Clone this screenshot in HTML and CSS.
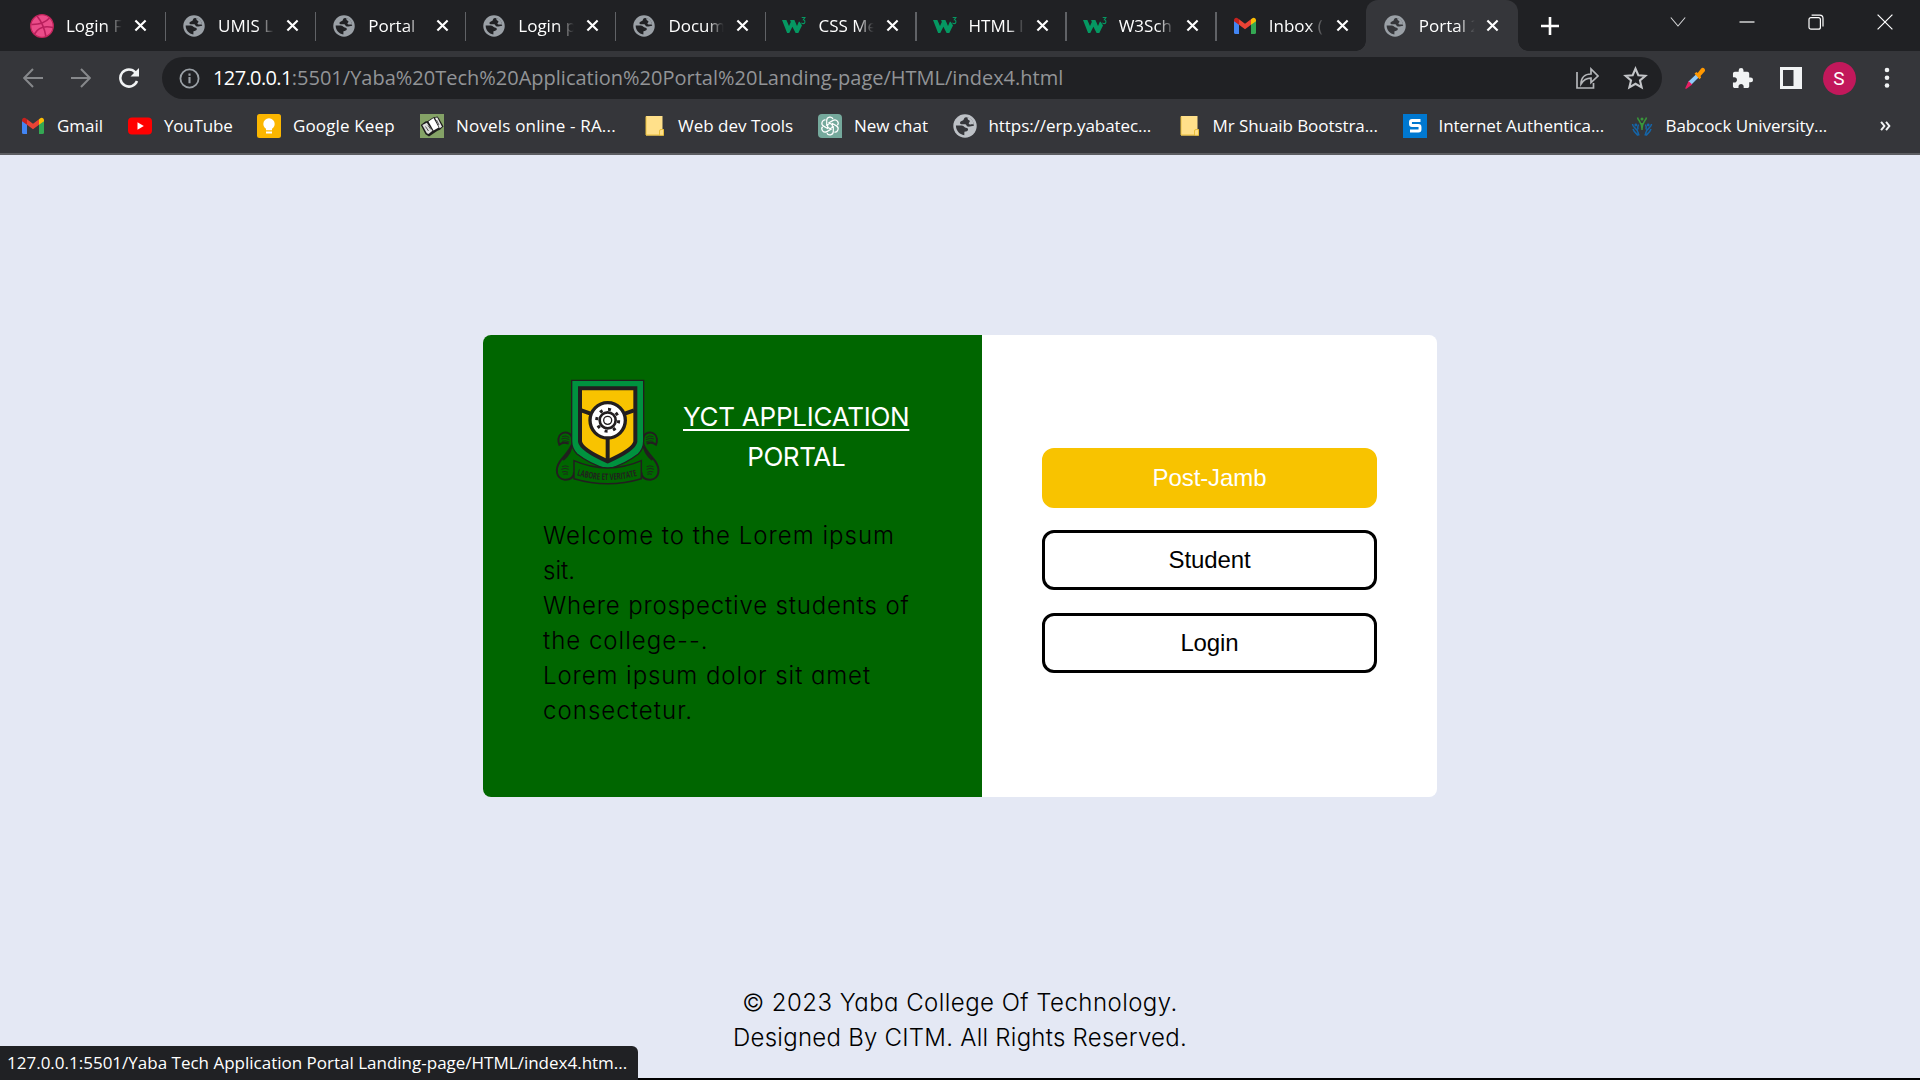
FILE: index.html
```html
<!DOCTYPE html>
<html lang="en">
<head>
<meta charset="utf-8">
<title>Portal 2</title>
<link rel="stylesheet" href="styles.css">
</head>
<body>
<svg class="defs" aria-hidden="true">
  <symbol id="globe" viewBox="0 0 24 24">
    <circle cx="12" cy="12" r="11.700" fill="currentColor"/>
    <path class="cut" d="M13 3.200c-2.500.6-1.600 2-2.800 3-1.400 1-3 .9-3.200 2.500-.1 1 1 1.500 2.300 1.500h2.800c1.300 0 1.300 2.100 2.800 2.400 2 .4 3.500-.9 6-.9C20.900 7 17.500 3.400 13 3.200zM2.900 11.500c0 5 3.600 9 8.400 9.700l.1-3.400c1.900-.3 3.600-.9 3.700-2.400.1-1.600-2.200-1.400-3.400-2.200-1.300-.8-1.200-1.700-3.200-1.700z"/>
    <path d="M14.500 3.300c0 1.500.3 2.600 1.500 3 1 .3 1.100 1.500.2 2.200-.9.800-.4 1.700.9 1.900 1.200.2 2-.4 3.800.2C20.500 7 18.500 4.300 14.500 3.300z" fill="currentColor"/>
  </symbol>
  <symbol id="gmail" viewBox="0 0 22 18">
    <path d="M0 3v12.500Q0 17 1.500 17H5V7z" fill="#4285f4"/>
    <path d="M22 3v12.500q0 1.500-1.500 1.500H17V7z" fill="#34a853"/>
    <path d="M5 2.200l6 4.600 6-4.600v5.600l-6 4.500-6-4.500z" fill="#ea4335"/>
    <path d="M0 3.200C0 .8 2.400 0 4 1.400l1 .8v5.600L0 4.200z" fill="#c5221f"/>
    <path d="M22 3.200C22 .8 19.600 0 18 1.400l-1 .8v5.600l5-3.600z" fill="#fbbc04"/>
  </symbol>
  <symbol id="w3" viewBox="0 0 24 20">
    <path d="M0 4h4.400l2.600 6 1.800-4-.7-2h4.300l2.600 6 1.800-4.200h.9l2.300 3.700L16.300 17h-2.700L10.400 10.800 7.300 17H5.100z" fill="#059862"/>
    <path d="M19.700 1.500h3.200l-1.600 2.300c2.500.4 2 3.900-.2 3.800-.8 0-1.300-.3-1.700-.9" fill="none" stroke="#059862" stroke-width="1.100"/>
  </symbol>
  <symbol id="x" viewBox="0 0 14 14"><path d="M1.500 1.500l11 11M12.500 1.500l-11 11" stroke="#fff" stroke-width="2.300" fill="none"/></symbol>
  <symbol id="folder" viewBox="0 0 24 24">
    <path d="M4 2h16.500v13.500h1.300v6H4z" fill="#ffe08a"/><path d="M4 2.500v18.500h13.500V17q0-1.500 1.500-1.500h2.500v5.800h-4" fill="none" stroke="#e9bf3c"/>
  </symbol>
</svg>

<div class="browser">
  <div class="tabstrip">
    <div class="tab first"><svg class="fav" viewBox="0 0 24 24"><circle cx="12" cy="12" r="11.300" fill="#ea4c89" stroke="#c2255c" stroke-width="1.300"/><path d="M7 2c5 6 7.500 12.500 8.800 20M1.500 10.500C9 10.700 15 9 19.500 4M4.500 20c3.500-6.500 10-8.500 18.500-6.500" fill="none" stroke="#b81f5c" stroke-width="1.600"/></svg><span class="title">Login F</span><svg class="close"><use href="#x"/></svg></div>
    <div class="tab"><svg class="fav globe"><use href="#globe"/></svg><span class="title">UMIS L</span><svg class="close"><use href="#x"/></svg></div>
    <div class="tab"><svg class="fav globe"><use href="#globe"/></svg><span class="title">Portal</span><svg class="close"><use href="#x"/></svg></div>
    <div class="tab"><svg class="fav globe"><use href="#globe"/></svg><span class="title">Login p</span><svg class="close"><use href="#x"/></svg></div>
    <div class="tab"><svg class="fav globe"><use href="#globe"/></svg><span class="title">Docum</span><svg class="close"><use href="#x"/></svg></div>
    <div class="tab"><svg class="fav"><use href="#w3"/></svg><span class="title">CSS Me</span><svg class="close"><use href="#x"/></svg></div>
    <div class="tab"><svg class="fav"><use href="#w3"/></svg><span class="title">HTML I</span><svg class="close"><use href="#x"/></svg></div>
    <div class="tab"><svg class="fav"><use href="#w3"/></svg><span class="title">W3Sch</span><svg class="close"><use href="#x"/></svg></div>
    <div class="tab last"><svg class="fav mail"><use href="#gmail"/></svg><span class="title">Inbox (</span><svg class="close"><use href="#x"/></svg></div>
    <div class="tab active"><svg class="fav globe"><use href="#globe"/></svg><span class="title">Portal 2</span><svg class="close"><use href="#x"/></svg></div>
    <svg class="newtab" viewBox="0 0 18 18"><path d="M9 0v18M0 9h18" stroke="#fff" stroke-width="2.600"/></svg>
    <div class="controls">
      <svg viewBox="0 0 16 16"><path d="M.8 3.500L8 12l7.200-8.500" fill="none" stroke="#d5d6d8" stroke-width="1.100"/></svg>
      <svg viewBox="0 0 16 16"><path d="M.5 8h15" stroke="#fff" stroke-width="1.200"/></svg>
      <svg viewBox="0 0 16 16"><rect x="1" y="3.600" width="11.400" height="11.600" rx="2" fill="none" stroke="#fff" stroke-width="1.200"/><path d="M3.600 1.200h8.200q3.200 0 3.200 3.200v8" fill="none" stroke="#fff" stroke-width="1.200"/></svg>
      <svg viewBox="0 0 16 16"><path d="M.6.6l14.800 14.800M15.400.6L.6 15.400" stroke="#fff" stroke-width="1.200"/></svg>
    </div>
  </div>

  <div class="toolbar">
    <div class="nav">
      <svg viewBox="0 0 20 20"><path d="M20 10H1.500M10 1L1.200 10l8.800 9" fill="none" stroke="#86888b" stroke-width="2"/></svg>
      <svg viewBox="0 0 20 20"><path d="M0 10h18.500M10 1l8.800 9-8.800 9" fill="none" stroke="#86888b" stroke-width="2"/></svg>
      <svg viewBox="0 0 20 20"><path d="M18 13a8.600 8.600 0 1 1-1.600-8.700" fill="none" stroke="#f1f3f4" stroke-width="2.500"/><path d="M20 0v8.500h-8.500z" fill="#f1f3f4"/></svg>
    </div>
    <div class="omnibox">
      <svg class="info" viewBox="0 0 22 22"><circle cx="11" cy="11" r="9.500" fill="none" stroke="#9aa0a6" stroke-width="1.900"/><path d="M11 9.500V16M11 5.800v2.200" stroke="#9aa0a6" stroke-width="2.200"/></svg>
      <span class="url"><span class="host">127.0.0.1</span>:5501/Yaba%20Tech%20Application%20Portal%20Landing-page/HTML/index4.html</span>
      <svg class="share" viewBox="0 0 23 22"><path d="M1 5v16h16.500v-5" fill="none" stroke="#b4b6b9" stroke-width="1.700"/><path d="M5 17c0-6.500 4-10 10-10V2l7 7-7 6.500v-4.300c-4.500 0-7.500 1.800-10 5.800z" fill="none" stroke="#b4b6b9" stroke-width="1.700"/></svg>
      <svg class="star" viewBox="0 0 24 24"><path d="M12 2.500l2.700 6.300 6.800.6-5.200 4.500 1.600 6.700-5.900-3.500-5.900 3.500 1.600-6.700-5.200-4.500 6.800-.6z" fill="none" stroke="#c4c6c9" stroke-width="2"/></svg>
    </div>
    <div class="actions">
      <svg viewBox="0 0 22 22"><path d="M4 15L13 6.500l2.800 2.800L7 18z" fill="#90caf9"/><path d="M1.200 21.200L4.600 14l3.600 3.400-5.400 4.200q-1.200.6-1.600-.4z" fill="#e91e63"/><path d="M10.500 6.500l2-1.500 1.200 1 3.300-4.300c2-2.300 5.200.5 3.600 2.900L16.500 9l.6 1.500-1.600 1.800z" fill="#ff9800"/></svg>
      <svg viewBox="1 0 23 23"><path d="M20.500 11H19V7c0-1.100-.9-2-2-2h-4V3.500a2.500 2.500 0 0 0-5 0V5H4c-1.100 0-1.990.9-1.990 2v3.800H3.500c1.490 0 2.700 1.210 2.700 2.700s-1.210 2.700-2.700 2.700H2V20c0 1.100.9 2 2 2h3.800v-1.500c0-1.490 1.210-2.700 2.700-2.700s2.700 1.210 2.700 2.700V22H17c1.100 0 2-.9 2-2v-4h1.500a2.500 2.500 0 0 0 0-5z" fill="#f1f3f4"/></svg>
      <svg viewBox="0 0 22 22"><path fill-rule="evenodd" d="M0 0h22v22H0zM3 3v16h10.500V3z" fill="#f1f3f4"/></svg>
      <span class="avatar">S</span>
      <svg viewBox="0 0 22 22"><g fill="#f1f3f4"><circle cx="11" cy="3" r="2.300"/><circle cx="11" cy="10.700" r="2.300"/><circle cx="11" cy="18.500" r="2.300"/></g></svg>
    </div>
  </div>

  <div class="bookmarks">
    <div class="bm"><svg class="mail"><use href="#gmail"/></svg><span>Gmail</span></div>
    <div class="bm yt"><svg viewBox="0 0 24 24"><rect y="3.500" width="24" height="17" rx="4" fill="#f00"/><path d="M9.500 8.300v7.400l6.300-3.700z" fill="#fff"/></svg><span>YouTube</span></div>
    <div class="bm keep"><svg viewBox="0 0 24 24"><rect width="24" height="24" rx="2.500" fill="#fbb600"/><circle cx="12" cy="10" r="5.700" fill="#fff"/><path d="M9 13h6v3.300H9zM9 17.600h6v2H9z" fill="#fff"/></svg><span>Google Keep</span></div>
    <div class="bm novels"><svg viewBox="0 0 24 24"><rect width="24" height="24" fill="#84a266"/><path d="M.8 11l4.500-3.500 2.500-.5L13 3.500l4.500-1L19 4.500l4.500 8-3.500 3.300-2.500 1L9 22.500l-3.500-2.300z" fill="#1d1d1d"/><path d="M2.300 11l4.500-2.300 5.700 8-4 3.300-1.700-.8z" fill="#ddd"/><path d="M8.500 7.500L13.500 4l5.200 9.500-5.200 3z" fill="#fff"/><path d="M15 3.800l2.300-.3 4.700 9.200-2.300 1.500z" fill="#eee"/><path d="M5.500 12.500l3 4.500M8 11.500l3 4M16.500 6l2.500 5" stroke="#555"/></svg><span>Novels online - RA...</span></div>
    <div class="bm"><svg><use href="#folder"/></svg><span>Web dev Tools</span></div>
    <div class="bm"><svg viewBox="0 0 24 24"><path d="M4 0h16q4 0 4 4v20H4q-4 0-4-4V4q0-4 4-4z" fill="#75a99c"/><g fill="none" stroke="#fff" stroke-width="1.200"><path id="petal" d="M12 9.300l-3.300 1.900V6.500c0-4 5.500-4.400 6.300-1.300"/><use href="#petal" transform="rotate(60 12 12)"/><use href="#petal" transform="rotate(120 12 12)"/><use href="#petal" transform="rotate(180 12 12)"/><use href="#petal" transform="rotate(240 12 12)"/><use href="#petal" transform="rotate(300 12 12)"/></g></svg><span>New chat</span></div>
    <div class="bm tight"><svg class="globe light"><use href="#globe"/></svg><span>https://erp.yabatec...</span></div>
    <div class="bm tight"><svg><use href="#folder"/></svg><span>Mr Shuaib Bootstra...</span></div>
    <div class="bm tight"><svg viewBox="0 0 24 24"><rect width="24" height="24" fill="#0078d0"/><path d="M17.500 6.500H9q-1.500 0-1.500 1.500v2q0 1.500 1.500 1.500h6.500q1.500 0 1.500 1.500v2.500q0 1.500-1.500 1.500H7" fill="none" stroke="#fff" stroke-width="2.900"/></svg><span>Internet Authentica...</span></div>
    <div class="bm tight"><svg viewBox="0 0 24 24"><g fill="none" stroke-width="1.500"><path d="M2.500 10c0 4 5 4 5.500 8.500L9 21.500M8.500 10.500c-1 2-1 3-.5 5M3 15c1 3 3 4 5 6.500" stroke="#1565a8"/><path d="M21.500 10c0 4-5 4-5.500 8.500L15 21.500M15.500 10.500c1 2 1 3 .5 5M21 15c-1 3-3 4-5 6.500" stroke="#1565a8"/><path d="M7.500 3.500c1 4 4 3.500 4.500 11.500.5-8 3.500-7.500 4.500-11.500M12 9v7" stroke="#39963b"/></g><circle cx="12" cy="5" r="1.500" fill="#39963b"/><circle cx="5.800" cy="11" r="1.400" fill="#1565a8"/><circle cx="18.200" cy="11" r="1.400" fill="#1565a8"/></svg><span>Babcock University...</span></div>
    <svg class="more" viewBox="0 0 10 9"><path d="M1 .7l3 3.800-3 3.800M5.500.7l3 3.800-3 3.800" fill="none" stroke="#f1f3f4" stroke-width="1.800"/></svg>
  </div>
</div>

<main class="page">
  <section class="card">
    <div class="intro">
      <div class="brand">
        <svg class="crest" viewBox="42 51 324 330">
          <g fill="none" stroke="#221e1f" stroke-width="6">
            <path d="M98 248c-8 26-22 34-38 56-16 24-12 52 14 55 18 1 28-8 28-22M308 248c8 26 22 34 38 56 16 24 12 52-14 55-18 1-28-8-28-22"/>
            <path d="M97 236c-4-20-24-22-34-14-10 6-9 22-5 32 8-7 18-7 28-3M309 236c4-20 24-22 34-14 10 6 9 22 5 32-8-7-18-7-28-3"/>
            <path d="M97 250c-2 20-14 38-28 50M309 250c2 20 14 38 28 50"/>
          </g>
          <g fill="none" stroke="#221e1f" stroke-width="2.500">
            <path d="M66 230q12-6 22 3M64 237q12-6 24 2M66 244q10-4 22 2M340 230q-12-6-22 3M342 237q-12-6-24 2M340 244q-10-4-22 2"/>
            <path d="M66 320q10-5 20 0M64 328q12-6 22 0M66 336q10-4 18 1M70 343q8-3 14 0M340 320q-10-5-20 0M342 328q-12-6-22 0M340 336q-10-4-18 1M336 343q-8-3-14 0"/>
          </g>
          <path d="M95 61h216v183q0 22-16 38-38 30-92 46-54-16-92-46-16-16-16-38z" fill="#00923f" stroke="#221e1f" stroke-width="4"/>
          <path d="M120 85h166v160q-4 24-83 59-79-35-83-59z" fill="#f8c300" stroke="#221e1f" stroke-width="12"/>
          <path d="M124 151l36 13M282 151l-36 13M203 232v70" stroke="#221e1f" stroke-width="12"/>
          <circle cx="203" cy="181" r="53" fill="#fff" stroke="#221e1f" stroke-width="10"/>
          <circle cx="203" cy="181" r="33" fill="none" stroke="#221e1f" stroke-width="9" stroke-dasharray="9 16.920"/>
          <circle cx="203" cy="181" r="24" fill="none" stroke="#221e1f" stroke-width="8"/>
          <circle cx="203" cy="181" r="12" fill="none" stroke="#221e1f" stroke-width="4"/>
          <path d="M102 302q101 44 202 0v54q-101 30-202 0z" fill="#006600" stroke="#221e1f" stroke-width="4.500"/>
          <path id="motto" d="M110 346q93 28 187 0" fill="none"/>
          <text class="motto"><textPath href="#motto" textLength="184" lengthAdjust="spacingAndGlyphs">LABORE ET VERITATE</textPath></text>
        </svg>
        <h1 class="heading"><span class="line under">YCT APPLICATION</span><span class="line portal">PORTAL</span></h1>
      </div>
      <p class="welcome">
        <span class="line l1">Welcome to the Lorem ipsum</span>
        <span class="line l2">sit.</span>
        <span class="line l3">Where prospective students of</span>
        <span class="line l4">the college--.</span>
        <span class="line l5">Lorem ipsum dolor sit amet</span>
        <span class="line l6">consectetur.</span>
      </p>
    </div>
    <div class="choices">
      <button class="btn primary">Post-Jamb</button>
      <button class="btn">Student</button>
      <button class="btn">Login</button>
    </div>
  </section>
  <footer class="footer">
    <span class="line f1">© 2023 Yaba College Of Technology.</span>
    <span class="line f2">Designed By CITM. All Rights Reserved.</span>
  </footer>
</main>
<div class="status">127.0.0.1:5501/Yaba Tech Application Portal Landing-page/HTML/index4.htm...</div>
</body>
</html>
```
FILE: styles.css
```css
* { box-sizing: border-box; }
body {
  margin: 0;
  width: 1920px;
  height: 1080px;
  overflow: hidden;
  display: flex;
  flex-direction: column;
  background: #e4e8f4;
  font-family: "Open Sans", "Noto Sans", sans-serif;
}
svg { display: block; flex: none; }
.defs { position: absolute; width: 0; height: 0; }

/* Browser chrome */
.browser { height: 155px; background: #35363a; border-bottom: 2px solid #5c5d61; color: #fff; flex: none; }
.tabstrip { display: flex; align-items: center; height: 51px; padding-left: 15px; background: #202124; }
.tab { position: relative; display: flex; align-items: center; width: 150.1px; height: 51px; padding-left: 17px; flex: none; }
.tab.first { padding-left: 15px; }
.tab:not(.last):not(.active)::after {
  content: ""; position: absolute; right: -1px; top: 12px; width: 1.5px; height: 29px; background: #606266;
}
.tab .fav { width: 24px; height: 24px; }
.tab .fav.globe { padding: 0 1px; }
.tab .fav.mail, .bm .mail { padding: 0 1px; }
.globe { color: #9aa0a6; --cut: #202124; }
.globe.light { color: #bdc1c6; --cut: #35363a; }
.active .globe { --cut: #35363a; }
.cut { fill: var(--cut); }
.title {
  width: 57px; margin-left: 12px; overflow: hidden; white-space: nowrap;
  font-size: 17px; line-height: 24px;
  mask-image: linear-gradient(90deg, #000 68%, transparent 98%);
}
.close { width: 13px; height: 13px; margin-left: 10.500px; }
.tab.active { width: 152px; background: #35363a; border-radius: 12px 12px 0 0; }
.tab.active::before, .tab.active::after {
  content: ""; position: absolute; bottom: 0; width: 10px; height: 10px;
}
.tab.active::before { left: -10px; background: radial-gradient(circle at 0 0, transparent 9.500px, #35363a 10px); }
.tab.active::after { right: -10px; background: radial-gradient(circle at 100% 0, transparent 9.500px, #35363a 10px); }
.newtab { width: 18px; height: 18px; margin-left: 23px; }
.controls { display: flex; gap: 53px; margin: 0 27px 8px auto; }
.controls svg { width: 16px; height: 16px; }

.toolbar { display: flex; align-items: center; height: 54px; }
.nav { display: flex; gap: 28px; width: 162px; padding-left: 23px; }
.nav svg { width: 20px; height: 20px; }
.omnibox { display: flex; align-items: center; width: 1500px; height: 42px; padding: 0 14px 0 17px; border-radius: 21px; background: #202124; }
.info { width: 21px; height: 21px; }
.url { margin-left: 13px; font-size: 20px; line-height: 28px; color: #929497; white-space: nowrap; padding-bottom: 0; }
.host { color: #fff; letter-spacing: -.62px; }
.share { width: 23px; height: 22px; margin-left: auto; }
.star { width: 25px; height: 25px; margin-left: 24px; }
.actions { display: flex; align-items: center; margin-left: 22px; gap: 26px; }
.actions svg { width: 22px; height: 22px; }
.avatar { width: 33px; height: 33px; margin: 0 -5.500px; border-radius: 50%; background: #c2185b; font: 19px/33px Roboto, sans-serif; text-align: center; }

.bookmarks {
  display: grid; align-items: center; height: 42px; padding-left: 21px;
  grid-template-columns: 107px 129px 163px 222px 176px 135px 224px 226px 227px 249px auto;
}
.bm { display: flex; align-items: center; gap: 12px; font-size: 17px; line-height: 24px; white-space: nowrap; }
.bm svg { width: 24px; height: 24px; }
.yt { letter-spacing: -.2px; }
.keep { letter-spacing: .14px; }
.novels { letter-spacing: .18px; }
.tight { gap: 11.500px; letter-spacing: -.07px; }
.more { width: 11px; height: 10px; margin-left: 1px; }

/* Landing page */
.page { display: flex; flex-direction: column; align-items: center; height: 923px; padding-top: 180px; flex: none; font-family: Inter, "Open Sans", sans-serif; color: #000; }
.line { display: block; white-space: nowrap; }
.card { display: flex; width: 954px; height: 462px; border-radius: 8px; overflow: hidden; background: #fff; }
.intro { width: 499px; padding: 42px 60px 0; background: #060; }
.brand { display: flex; gap: 21px; height: 110px; padding-left: 11px; }
.crest { width: 108px; height: 110px; }
.motto { font: 700 27px "Open Sans", sans-serif; fill: #221e1f; }
.heading { margin: 20px 0 0; font-size: 26px; font-weight: 400; line-height: 40px; text-align: center; color: #fff; letter-spacing: -.25px; }
.under { text-decoration: underline; text-decoration-thickness: 2px; text-underline-offset: 3px; }
.portal { letter-spacing: -.4px; }
.welcome { margin: 31px 0 0; }
.welcome, .footer { font-size: 24px; font-weight: 300; line-height: 35px; font-feature-settings: "cv11"; }
.l1 { letter-spacing: 1.01px; }
.l3 { letter-spacing: .84px; }
.l4 { letter-spacing: 1px; }
.l5 { letter-spacing: .92px; }
.l6 { letter-spacing: 1.05px; }
.choices { display: flex; flex-direction: column; gap: 22px; width: 455px; padding: 113px 60px 0; }
.btn { height: 60px; border: 3px solid #000; border-radius: 12px; background: #fff; color: #000; font: 24px "Liberation Sans", Arial, sans-serif; letter-spacing: -.1px; }
.btn.primary { background: #f8c300; border-color: #f8c300; color: #fff; }
.btn:last-child { margin-top: 1px; }
.footer { margin-top: 188px; text-align: center; }
.f1 { letter-spacing: .45px; }
.f2 { letter-spacing: .25px; }
body::after { content: ""; height: 2px; background: #000; flex: none; }
.status {
  position: absolute; left: 0; bottom: 0; width: 638px; height: 34px; padding-left: 7px;
  border-radius: 0 6px 0 0; background: #202124; color: #fff; font-size: 17px; line-height: 33px; white-space: nowrap;
}
```
